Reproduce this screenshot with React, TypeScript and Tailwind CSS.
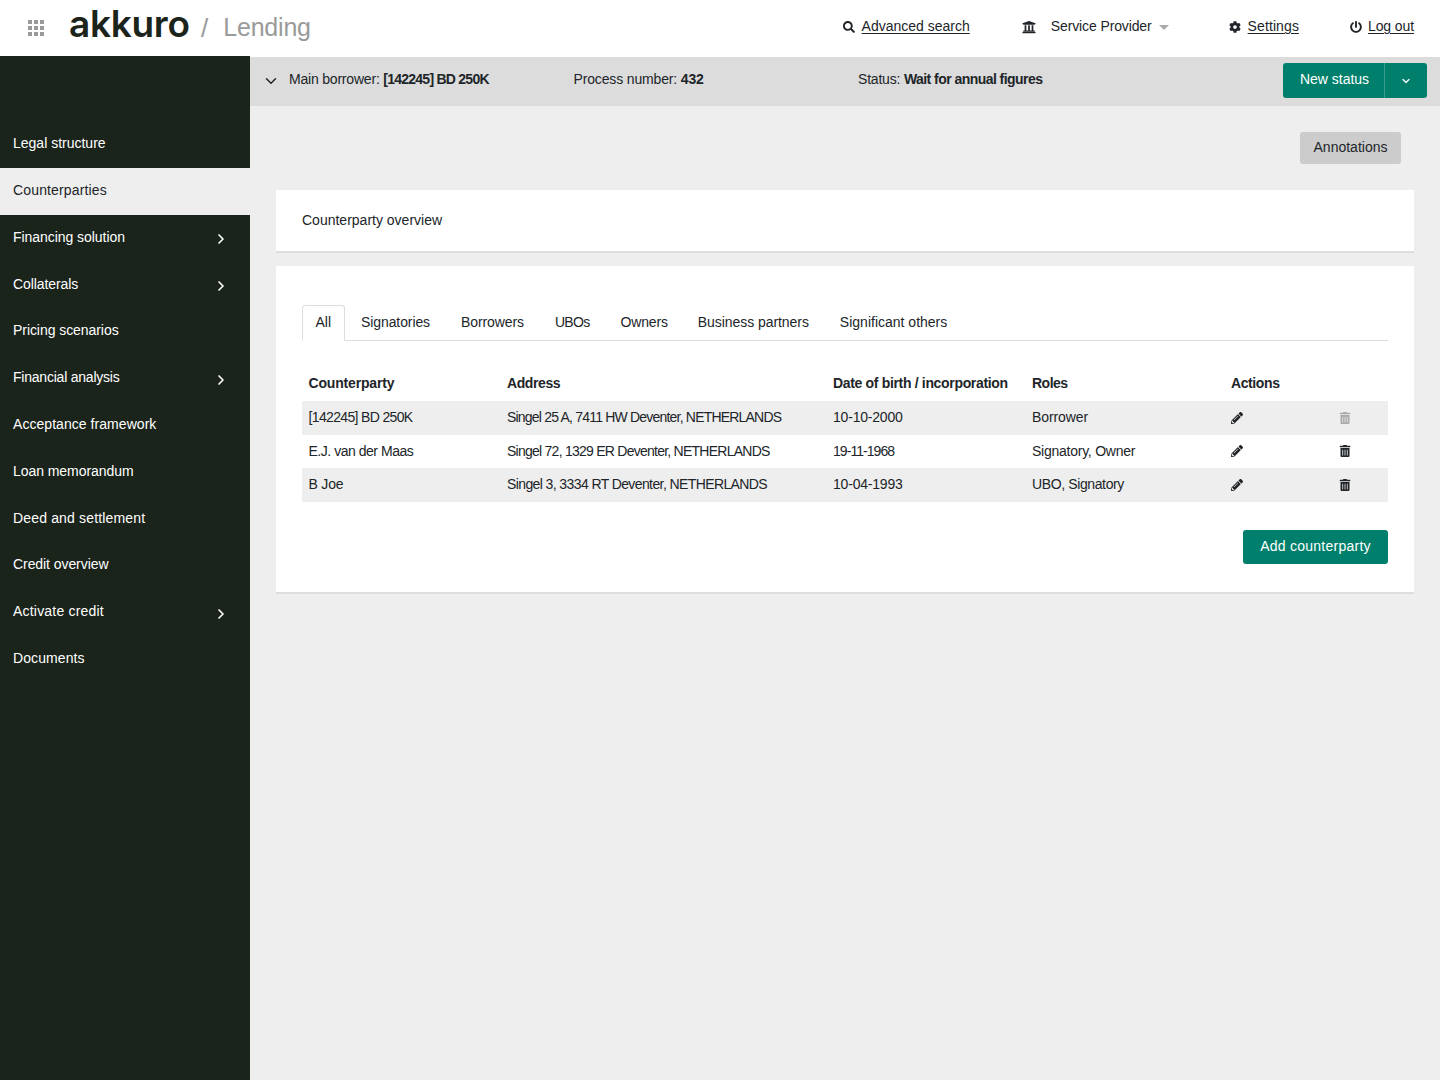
import { ChevronDown, ChevronRight } from "lucide-react";
import { FaCog, FaPencilAlt, FaPowerOff, FaSearch, FaTrashAlt, FaUniversity } from "react-icons/fa";

const font = "font-['Liberation_Sans',Arial,sans-serif]";

const navItems = [
  { label: "Legal structure", track: "" },
  { label: "Counterparties", track: "tracking-[0.15px]", active: true },
  { label: "Financing solution", track: "tracking-[-0.05px]", more: true },
  { label: "Collaterals", track: "tracking-[-0.1px]", more: true },
  { label: "Pricing scenarios", track: "tracking-[-0.06px]" },
  { label: "Financial analysis", track: "tracking-[-0.22px]", more: true },
  { label: "Acceptance framework", track: "tracking-[0.05px]" },
  { label: "Loan memorandum", track: "tracking-[-0.06px]" },
  { label: "Deed and settlement", track: "tracking-[0.16px]" },
  { label: "Credit overview", track: "tracking-[-0.07px]" },
  { label: "Activate credit", track: "tracking-[0.2px]", more: true },
  { label: "Documents", track: "tracking-[0.1px]" },
];

const tabs = [
  { label: "All", track: "" },
  { label: "Signatories", track: "ml-px tracking-[-0.1px]" },
  { label: "Borrowers", track: "tracking-[-0.1px]" },
  { label: "UBOs", track: "tracking-[-0.7px]" },
  { label: "Owners", track: "-mr-px tracking-[-0.15px]" },
  { label: "Business partners", track: "tracking-[-0.06px]" },
  { label: "Significant others", track: "" },
];

const rows = [
  {
    name: "[142245] BD 250K",
    nameTrack: "tracking-[-0.65px]",
    address: "Singel 25 A, 7411 HW Deventer, NETHERLANDS",
    addressTrack: "tracking-[-0.8px]",
    date: "10-10-2000",
    dateTrack: "tracking-[-0.2px]",
    roles: "Borrower",
    rolesTrack: "tracking-[-0.1px]",
    lift: "pb-[2px]",
    locked: true,
  },
  {
    name: "E.J. van der Maas",
    nameTrack: "tracking-[-0.47px]",
    address: "Singel 72, 1329 ER Deventer, NETHERLANDS",
    addressTrack: "tracking-[-0.75px]",
    date: "19-11-1968",
    dateTrack: "tracking-[-0.95px]",
    roles: "Signatory, Owner",
    rolesTrack: "tracking-[-0.25px]",
    lift: "",
  },
  {
    name: "B Joe",
    nameTrack: "tracking-[-0.2px]",
    address: "Singel 3, 3334 RT Deventer, NETHERLANDS",
    addressTrack: "tracking-[-0.6px]",
    date: "10-04-1993",
    dateTrack: "tracking-[-0.2px]",
    roles: "UBO, Signatory",
    rolesTrack: "tracking-[-0.38px]",
    lift: "pb-[2px]",
  },
];

const Header = () => (
  <header className="flex h-14 items-center bg-white pl-7 pr-[26px]">
    <div className="grid w-4 grid-cols-3 gap-[1.5px]">
      {Array.from({ length: 9 }).map((_, i) => (
        <span key={i} className="h-[4.5px] bg-[#9a9a9a]" />
      ))}
    </div>
    <span className="mb-[9px] ml-[25px] w-[121px] font-['Inter',sans-serif] text-[37px] leading-none font-semibold tracking-[-0.3px] text-[#1b241b]">
      akkuro
    </span>
    <span className="ml-[11px] text-[26px] font-light text-[#9a9a9a]">/</span>
    <span className="ml-[15px] text-[25px] tracking-[-0.2px] text-[#9a9a9a]">Lending</span>

    <div className="ml-auto flex items-center pb-1 text-sm text-[#212529]">
      <FaSearch className="mr-[7px] mt-[2px] size-3" />
      <a className="underline underline-offset-2">Advanced search</a>
      <FaUniversity className="ml-[52px] mr-[15px] mt-[2px] size-[14px]" />
      <span className="tracking-[-0.12px]">Service Provider</span>
      <span className="ml-[7px] mt-[2px] h-0 w-0 border-x-[5px] border-t-[5px] border-x-transparent border-t-[#aaaaaa]" />
      <FaCog className="ml-[60px] mr-[7px] mt-[2px] size-3" />
      <a className="tracking-[0.1px] underline underline-offset-2">Settings</a>
      <FaPowerOff className="ml-[51px] mr-[6px] mt-[2px] size-3" />
      <a className="tracking-[-0.1px] underline underline-offset-2">Log out</a>
    </div>
  </header>
);

const Sidebar = () => (
  <aside className="w-[250px] shrink-0 bg-[#1b241b] pt-[65px] text-sm text-white">
    {navItems.map((item) => (
      <div
        key={item.label}
        className={`flex h-[46.8px] items-center justify-between pb-[2.4px] pl-[13px] pr-[21px] ${item.active ? "bg-[#eeeeee] text-[#212529]" : ""}`}
      >
        <span className={item.track}>{item.label}</span>
        {item.more && <ChevronRight className="mt-[5px] size-4" strokeWidth={2.5} />}
      </div>
    ))}
  </aside>
);

const StatusBar = () => (
  <div className="flex h-[50px] items-center border-t border-white bg-[#dcdcdc] pb-[2px] pl-[12px] pr-[13px] text-sm text-[#212529]">
    <ChevronDown className="mr-[9px] size-[18px]" strokeWidth={2} />
    <span className="mb-1 w-[284.5px] tracking-[-0.2px]">
      Main borrower: <b className="tracking-[-0.75px]">[142245] BD 250K</b>
    </span>
    <span className="mb-1 w-[284.5px] tracking-[-0.15px]">
      Process number: <b>432</b>
    </span>
    <span className="mb-1 tracking-[-0.2px]">
      Status: <b className="tracking-[-0.55px]">Wait for annual figures</b>
    </span>
    <div className="ml-auto flex h-[35px] items-center rounded-[3px] bg-[#00806c] text-white">
      <span className="flex h-full w-[102px] items-center justify-center border-r border-[#3a9c8c] pb-1 pl-[2px]">New status</span>
      <span className="flex w-[42px] justify-center">
        <ChevronDown className="size-3" strokeWidth={2.5} />
      </span>
    </div>
  </div>
);

const Table = () => (
  <table className="mt-[25px] w-full table-fixed text-left text-sm text-[#212529]">
    <thead>
      <tr className="h-[35px]">
        <th className="w-[199px] pb-[2px] pl-[6.5px] font-bold tracking-[-0.18px]">Counterparty</th>
        <th className="w-[326px] pb-[2px] pl-[6px] font-bold tracking-[-0.4px]">Address</th>
        <th className="w-[199px] pb-[2px] pl-[6px] font-bold tracking-[-0.33px]">Date of birth / incorporation</th>
        <th className="w-[199px] pb-[2px] pl-[6px] font-bold tracking-[-0.5px]">Roles</th>
        <th className="w-[109px] pb-[2px] pl-[6px] font-bold tracking-[-0.4px]">Actions</th>
        <th />
      </tr>
    </thead>
    <tbody>
      {rows.map((row, i) => (
        <tr key={row.name} className={`h-[33.6px] ${i % 2 === 0 ? "bg-[#eeeeee]" : ""}`}>
          <td className={`pl-[6.5px] ${row.lift} ${row.nameTrack}`}>{row.name}</td>
          <td className={`pl-[6px] ${row.lift} ${row.addressTrack}`}>{row.address}</td>
          <td className={`pl-[6px] ${row.lift} ${row.dateTrack}`}>{row.date}</td>
          <td className={`pl-[6px] ${row.lift} ${row.rolesTrack}`}>{row.roles}</td>
          <td className="pl-[6px]">
            <FaPencilAlt className={`size-3 ${i === 1 ? "" : "mt-px"}`} />
          </td>
          <td className="pl-[5px]">
            <FaTrashAlt className={`size-3 ${i === 1 ? "" : "mt-px"} ${row.locked ? "text-[#aaaaaa]" : ""}`} />
          </td>
        </tr>
      ))}
    </tbody>
  </table>
);

export default function App() {
  return (
    <div className={`flex min-h-[1080px] flex-col bg-[#eeeeee] ${font}`}>
      <Header />
      <div className="flex flex-1">
        <Sidebar />
        <main className="flex-1">
          <StatusBar />
          <div className="px-[26px]">
            <div className="mr-[13px] mt-[26px] flex justify-end">
              <button className="h-8 w-[101px] rounded-[3px] bg-[#cccccc] pb-[2px] text-sm text-[#212529]">Annotations</button>
            </div>

            <section className="mt-[26px] flex h-[63px] items-center border-b-2 border-[#dddddd] bg-white px-[26px] pb-px text-sm text-[#212529]">
              Counterparty overview
            </section>

            <section className="mt-[13px] h-[328px] border-b-2 border-[#dddddd] bg-white px-[26px] pt-[39px]">
              <div className="flex h-9 border-b border-[#dddddd] text-sm text-[#212529]">
                {tabs.map((tab, i) => (
                  <span
                    key={tab.label}
                    className={
                      i === 0
                        ? "-mb-px flex h-9 items-center rounded-t-[3px] border border-b-white border-[#dddddd] bg-white px-[12.5px] pb-[2px]"
                        : `flex items-center px-[15.5px] pb-[2px] ${tab.track}`
                    }
                  >
                    {tab.label}
                  </span>
                ))}
              </div>
              <Table />
              <div className="mt-7 flex justify-end">
                <button className="h-[34px] w-[145px] rounded-[3px] bg-[#00806c] pb-[2px] text-sm tracking-[0.25px] text-white">Add counterparty</button>
              </div>
            </section>
          </div>
        </main>
      </div>
    </div>
  );
}
